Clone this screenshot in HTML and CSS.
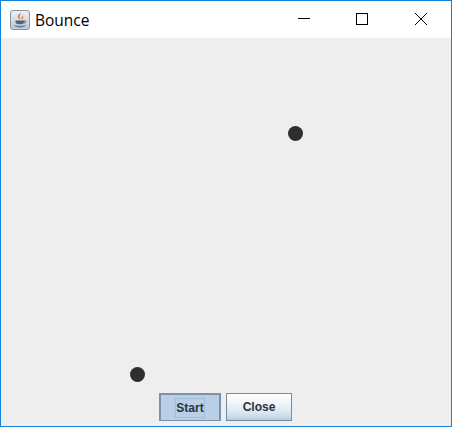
FILE: index.html

```html
<!DOCTYPE html>
<html lang="en">
<head>
    <meta charset="UTF-8">
    <meta name="viewport" content="width=device-width, initial-scale=1.0">
    <title>Bounce</title>
    <link rel="stylesheet" href="styles.css">
</head>
<body>
<div class="window">
    <div class="titlebar">
        <svg class="app-icon" width="20" height="20" viewBox="0 0 20 20">
            <defs>
                <linearGradient id="iconBg" x1="0" y1="0" x2="0" y2="1">
                    <stop offset="0" stop-color="#eef1f5"/>
                    <stop offset="1" stop-color="#bcc8d6"/>
                </linearGradient>
            </defs>
            <rect x="0.5" y="0.5" width="19" height="19" rx="2.5" fill="url(#iconBg)" stroke="#8493a6"/>
            <path d="M10.500 2.500c1.200 1.800-1.800 2.800-1 5 .3.800 1 1.400 1.200 2.300-1.800-.8-3.400-2.300-2.800-4 .4-1.300 2.400-1.800 2.600-3.300z" fill="#dd6a1c"/>
            <path d="M12.800 5c-.4 1.100-1.500 1.700-1.400 2.800 0 .6.300 1.100.4 1.700 1-.7 1.800-1.500 1.500-2.600-.1-.7-.5-1.100-.5-1.900z" fill="#e58a3c"/>
            <path d="M5.500 10.500h8.500v1.400c0 1.600-1.500 2.300-4.200 2.300s-4.300-.7-4.300-2.300z" fill="#4f6478"/>
            <path d="M14 11h1.300c1 0 1 1.700-1.500 2.200" fill="none" stroke="#4f6478"/>
            <path d="M3.500 14.800c3 1.500 10 1.500 13 0-1 2-3.400 2.700-6.500 2.700s-5.500-.7-6.500-2.700z" fill="#66798c"/>
        </svg>
        <span class="title">Bounce</span>
        <div class="controls">
            <div class="control">
                <svg width="12" height="12" viewBox="0 0 12 12"><path d="M0 5.500h12" stroke="#000" fill="none"/></svg>
            </div>
            <div class="control">
                <svg width="12" height="12" viewBox="0 0 12 12"><rect x="0.500" y="0.500" width="11" height="11" stroke="#000" fill="none"/></svg>
            </div>
            <div class="control control-close">
                <svg width="12" height="12" viewBox="0 0 12 12"><path d="M0 0l12 12M12 0L0 12" stroke="#000" fill="none"/></svg>
            </div>
        </div>
    </div>
    <div class="content">
        <div class="canvas">
            <div class="ball ball-a"></div>
            <div class="ball ball-b"></div>
        </div>
        <div class="buttons">
            <button class="btn btn-start"><span class="focus">Start</span></button>
            <button class="btn btn-close">Close</button>
        </div>
    </div>
</div>
</body>
</html>
```

FILE: styles.css

```css
* {
    box-sizing: border-box;
}
body {
    margin: 0;
    padding: 0;
    background-color: #eeeeee;
}
.window {
    width: 452px;
    height: 427px;
    display: flex;
    flex-direction: column;
    border: 1px solid #1583dc;
    background-color: #eeeeee;
    overflow: hidden;
}
.titlebar {
    height: 37px;
    flex: none;
    display: flex;
    align-items: center;
    padding-left: 9px;
    background-color: #ffffff;
}
.app-icon {
    flex: none;
}
.title {
    margin-left: 5px;
    font-family: "Open Sans", "Noto Sans", sans-serif;
    font-size: 15.5px;
    color: #000;
}
.controls {
    margin-left: auto;
    display: flex;
}
.control {
    width: 58px;
    height: 37px;
    padding-top: 12px;
    display: flex;
    align-items: flex-start;
    justify-content: center;
}
.control-close {
    width: 60px;
}
.content {
    flex: 1;
    display: flex;
    flex-direction: column;
}
.canvas {
    flex: 1;
    position: relative;
}
.ball {
    position: absolute;
    width: 15px;
    height: 15px;
    border-radius: 50%;
    background-color: #2e2e2e;
}
.ball-a {
    left: 287px;
    top: 88px;
}
.ball-b {
    left: 129px;
    top: 329px;
}
.buttons {
    flex: none;
    display: flex;
    gap: 5px;
    height: 33px;
    padding: 0 0 5px 158px;
}
.btn {
    height: 28px;
    padding: 0;
    display: flex;
    align-items: center;
    justify-content: center;
    border: 1px solid #7a8a99;
    font-family: "Liberation Sans", Arial, sans-serif;
    font-size: 12px;
    font-weight: bold;
    color: #2a333c;
}
.btn-start {
    width: 62px;
    border-width: 2px 2px 1px;
    border-color: #7d91a8;
    background-color: #b8cfe5;
}
.btn-close {
    width: 66px;
    background: linear-gradient(#ffffff, #f0f5fa 35%, #d6e4f1 75%, #b8cfe5);
}
.focus {
    width: 30px;
    height: 20px;
    display: flex;
    align-items: center;
    justify-content: center;
    border: 1px solid #a3bdd8;
}
```
